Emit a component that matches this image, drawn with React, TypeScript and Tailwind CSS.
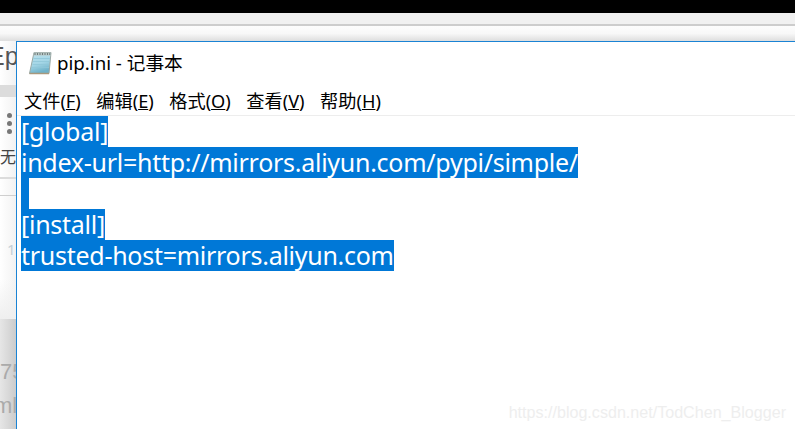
const lines = ["[global]", "index-url=http://mirrors.aliyun.com/pypi/simple/", "", "[install]", "trusted-host=mirrors.aliyun.com"];
const menus: [string, string][] = [["文件", "F"], ["编辑", "E"], ["格式", "O"], ["查看", "V"], ["帮助", "H"]];

function NotepadIcon() {
  return (
    <svg width="26" height="26" viewBox="0 0 26 26" className="shrink-0">
      <defs>
        <linearGradient id="pad" x1="0" y1="0" x2="0.3" y2="1">
          <stop offset="0" stopColor="#bfe3ee" />
          <stop offset="0.6" stopColor="#a4d6e6" />
          <stop offset="1" stopColor="#6fb2c9" />
        </linearGradient>
      </defs>
      <path d="M7 2.500H24L22 23.500H2.500Z" fill="url(#pad)" stroke="#9aa8a4" strokeWidth="1" />
      <path d="M7 2.500H24L23.700 5.500H6.500Z" fill="#b9c6c4" />
      <path d="M8 3V5M10.500 3V5M13 3V5M15.500 3V5M18 3V5M20.500 3V5M22.800 3V5" stroke="#6f7d7c" strokeWidth="1" />
      <path d="M6.500 8.500H22.800M6 11.500H22.500M5.500 14.500H22.200M5 17.500H22" stroke="#8fc6d8" strokeWidth="0.8" />
      <path d="M2.500 23.500H22" stroke="#a8987c" strokeWidth="1.500" />
    </svg>
  );
}

export default function App() {
  return (
    <div className="w-[795px] h-[429px] overflow-hidden flex flex-col bg-white font-['Noto_Sans','Noto_Sans_CJK_SC',sans-serif]">
      <div className="h-[13px] bg-black shrink-0" />
      <div className="h-[11px] bg-[#f1f1f1] shrink-0" />
      <div className="h-[2px] bg-[#cdcdcd] shrink-0" />
      <div className="h-[15px] shrink-0 bg-gradient-to-b from-[#fdfdfd] via-[#f8f8f8] to-[#dedede]" />
      <div className="flex-1 flex min-h-0">
        <div className="w-[16px] shrink-0 flex flex-col overflow-hidden bg-gradient-to-r from-white to-[#f2f2f2]">
          <div className="h-[44px] shrink-0 text-[25px] leading-[28px] text-[#555] pt-[1px] -ml-[12px] whitespace-nowrap font-['Liberation_Sans',sans-serif]">Ep</div>
          <div className="h-[12px] bg-[#dcdcdc] shrink-0" />
          <div className="h-[16px] shrink-0" />
          <div className="flex flex-col gap-[3px] ml-[7px] shrink-0">
            <div className="w-[5px] h-[5px] rounded-full bg-[#777]" />
            <div className="w-[5px] h-[5px] rounded-full bg-[#777]" />
            <div className="w-[5px] h-[5px] rounded-full bg-[#777]" />
          </div>
          <div className="h-[12px] shrink-0" />
          <div className="text-[16px] leading-[22px] text-[#444] h-[31px] shrink-0 whitespace-nowrap">无</div>
          <div className="h-[2px] bg-[#dcdcdc] shrink-0" />
          <div className="h-[17px] shrink-0 border-b border-[#cfcfcf]" />
          <div className="h-[43px] shrink-0" />
          <div className="text-[15px] leading-[20px] text-[#c4cfd6] pl-[7px] h-[80px] shrink-0 bg-gradient-to-b from-transparent via-transparent to-[#efefef]">1</div>
          <div className="flex-1 bg-gradient-to-r from-[#e6e6e6] to-[#cccccc] text-[#aaa] text-[22px] font-['Liberation_Sans',sans-serif]">
            <div className="h-[40px]" />
            <div className="leading-[26px] whitespace-nowrap">75</div>
            <div className="leading-[30px] -ml-[6px] mt-[6px] whitespace-nowrap">ml</div>
          </div>
        </div>
        <div className="flex-1 min-w-0 flex flex-col border-l-[1px] border-t-[1px] border-[#1a83d4] bg-white">
          <div className="h-[48px] shrink-0 flex items-center pl-[10px] gap-[2px] pb-[6px]">
            <NotepadIcon />
            <span className="text-[18.7px] text-black ml-[2px]">pip.ini - 记事本</span>
          </div>
          <div className="h-[25px] shrink-0 flex items-center pl-[7px] gap-[15.5px] text-[18.2px] leading-[22px] text-black -mt-[2px] mb-[2px]">
            {menus.map(([name, key]) => (
              <span key={name} className="whitespace-nowrap">
                {name}(<span className="underline">{key}</span>)
              </span>
            ))}
          </div>
          <div className="h-[1px] bg-[#ededed] shrink-0" />
          <div className="flex-1 relative pl-[4px] overflow-hidden">
            {lines.map((line, i) => (
              <div key={i} className="h-[31px] flex">
                <span className="bg-[#0078d7] text-white text-[25px] leading-[31px] whitespace-pre min-w-[8px] tracking-[-0.27px]">{line}</span>
              </div>
            ))}
            <div className="absolute right-[9px] bottom-[5px] text-[16.1px] leading-[24px] text-[#eeeeee] font-['Liberation_Sans',sans-serif]">https://blog.csdn.net/TodChen_Blogger</div>
          </div>
        </div>
      </div>
    </div>
  );
}
